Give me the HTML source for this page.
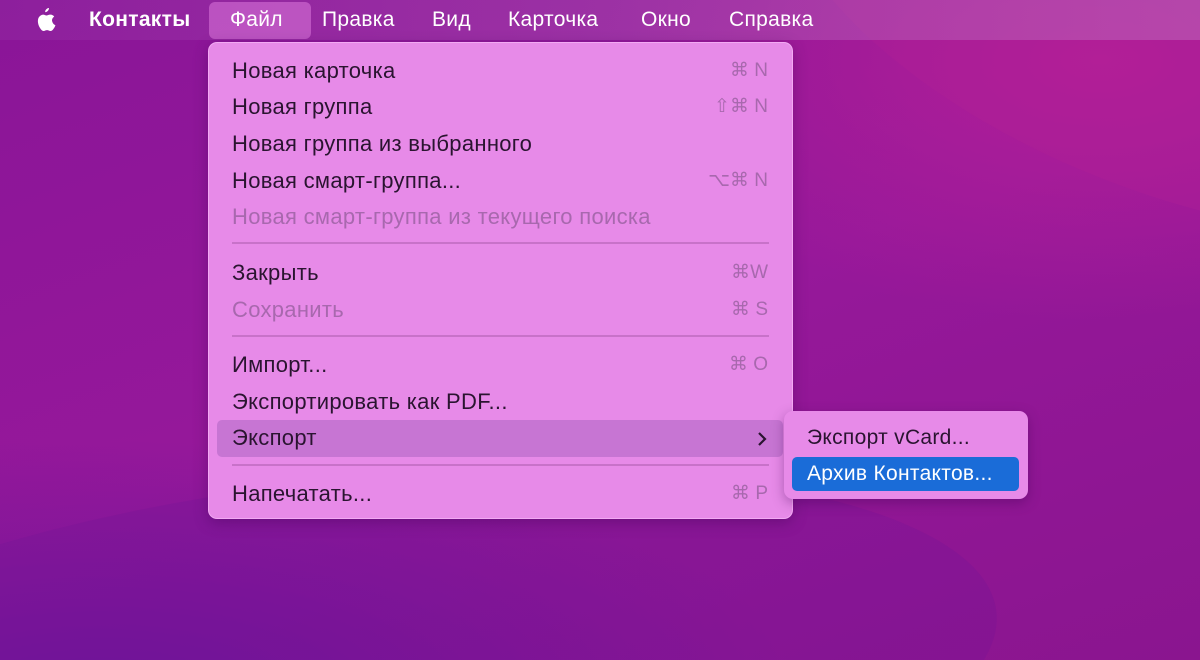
<!DOCTYPE html>
<html style="width:1200px;height:660px;overflow:hidden"><head><meta charset="utf-8"><style>
*{margin:0;padding:0;box-sizing:border-box}
body{width:1200px;height:660px;overflow:hidden;position:relative;font-family:"Liberation Sans","DejaVu Sans",sans-serif;
background:#8c1697;}
.clip{position:absolute;left:0;top:0;width:1200px;height:660px;overflow:hidden}
.bg{position:absolute;inset:0;background:
radial-gradient(ellipse 500px 260px at 1100px 60px,#b21f98 0%,rgba(178,31,152,0) 100%),
radial-gradient(ellipse 700px 260px at 100px 700px,#6c1498 0%,rgba(108,20,152,0) 100%),
linear-gradient(160deg,#8a1598 0%,#96189a 50%,#8a158f 100%);}
.wave1{position:absolute;left:-300px;top:480px;width:1300px;height:400px;border-radius:50%;background:rgba(110,18,150,.25);transform:rotate(-6deg)}
.wave2{position:absolute;left:750px;top:-250px;width:900px;height:450px;border-radius:50%;background:rgba(180,32,150,.3);transform:rotate(20deg)}
.bar{position:absolute;left:0;top:0;width:1200px;height:40px;background:linear-gradient(90deg,rgba(150,60,170,.25),rgba(190,110,190,.5));}
.bar span{position:absolute;top:8px;font-size:21px;color:#fff;letter-spacing:.3px}
.sel{position:absolute;left:209px;top:2px;width:102px;height:37px;border-radius:6px;background:rgba(220,120,220,.55)}
.menu{position:absolute;left:208px;top:42px;width:585px;height:477px;border-radius:9px;background:#e78ae8;box-shadow:0 4px 14px rgba(60,0,80,.35);border:1px solid rgba(255,200,255,.5)}
.it{position:absolute;left:23px;font-size:22px;color:#2a1430;height:30px;line-height:30px;letter-spacing:.3px;white-space:nowrap}
.dis{color:#a868ae}
.sc{position:absolute;right:24px;font-size:19px;color:#a868ae;height:30px;line-height:30px}
.sep{position:absolute;left:23px;right:23px;height:2px;background:#c872c9}
.hl{position:absolute;left:8px;width:566px;top:377px;height:37px;border-radius:5px;background:#c775d3}
.sub{position:absolute;left:784px;top:411px;width:244px;height:88px;border-radius:9px;background:#e78ae8;box-shadow:0 4px 12px rgba(60,0,80,.35)}
.blue{position:absolute;left:8px;top:46px;width:227px;height:34px;border-radius:5px;background:#1a6cd8}
.sub .it{font-size:21px}
</style></head><body>
<div class="clip"><div class="bg"></div><div class="wave1"></div><div class="wave2"></div></div>
<div class="bar">
<svg style="position:absolute;left:34px;top:7px" width="22" height="26" viewBox="0 0 22 26"><path fill="#fff" d="M15 1c0 2-1.5 4-3.8 4.2C11 3 12.8 1.2 15 1zM18 13.5c0-2.6 2.1-3.8 2.2-3.9-1.2-1.8-3.1-2-3.8-2-1.6-.2-3.1.9-3.9.9-.8 0-2-.9-3.4-.9C7.4 7.7 5.7 8.8 4.8 10.4c-1.9 3.3-.5 8.2 1.4 10.900.9 1.3 2 2.8 3.4 2.7 1.4-.1 1.9-.9 3.5-.9 1.6 0 2.1.9 3.5.9 1.5 0 2.4-1.3 3.3-2.7 1-1.5 1.5-3 1.5-3.1-.1 0-2.9-1.1-3.4-4.7z"/></svg>
<div class="sel"></div>
<span style="left:89px;font-weight:bold">Контакты</span>
<span style="left:230px">Файл</span>
<span style="left:322px">Правка</span>
<span style="left:432px">Вид</span>
<span style="left:508px">Карточка</span>
<span style="left:641px">Окно</span>
<span style="left:729px">Справка</span>
</div>
<div class="menu">
<div class="hl"></div>
<div class="it" style="top:13px">Новая карточка</div><div class="sc" style="top:13px">⌘ N</div>
<div class="it" style="top:49px">Новая группа</div><div class="sc" style="top:49px">⇧⌘ N</div>
<div class="it" style="top:86px">Новая группа из выбранного</div>
<div class="it" style="top:123px">Новая смарт-группа...</div><div class="sc" style="top:123px">⌥⌘ N</div>
<div class="it dis" style="top:159px">Новая смарт-группа из текущего поиска</div>
<div class="sep" style="top:199px"></div>
<div class="it" style="top:215px">Закрыть</div><div class="sc" style="top:215px">⌘W</div>
<div class="it dis" style="top:252px">Сохранить</div><div class="sc" style="top:252px">⌘ S</div>
<div class="sep" style="top:292px"></div>
<div class="it" style="top:307px">Импорт...</div><div class="sc" style="top:307px">⌘ O</div>
<div class="it" style="top:344px">Экспортировать как PDF...</div>
<div class="it" style="top:380px">Экспорт</div>
<svg style="position:absolute;left:547px;top:388px" width="12" height="16" viewBox="0 0 12 16"><path d="M3 2l6 6-6 6" fill="none" stroke="#2a1430" stroke-width="2.2"/></svg>
<div class="sep" style="top:421px"></div>
<div class="it" style="top:436px">Напечатать...</div><div class="sc" style="top:436px">⌘ P</div>
</div>
<div class="sub">
<div class="blue"></div>
<div class="it" style="top:12px">Экспорт vCard...</div>
<div class="it" style="top:48px;color:#fff">Архив Контактов...</div>
</div>
</body></html>
